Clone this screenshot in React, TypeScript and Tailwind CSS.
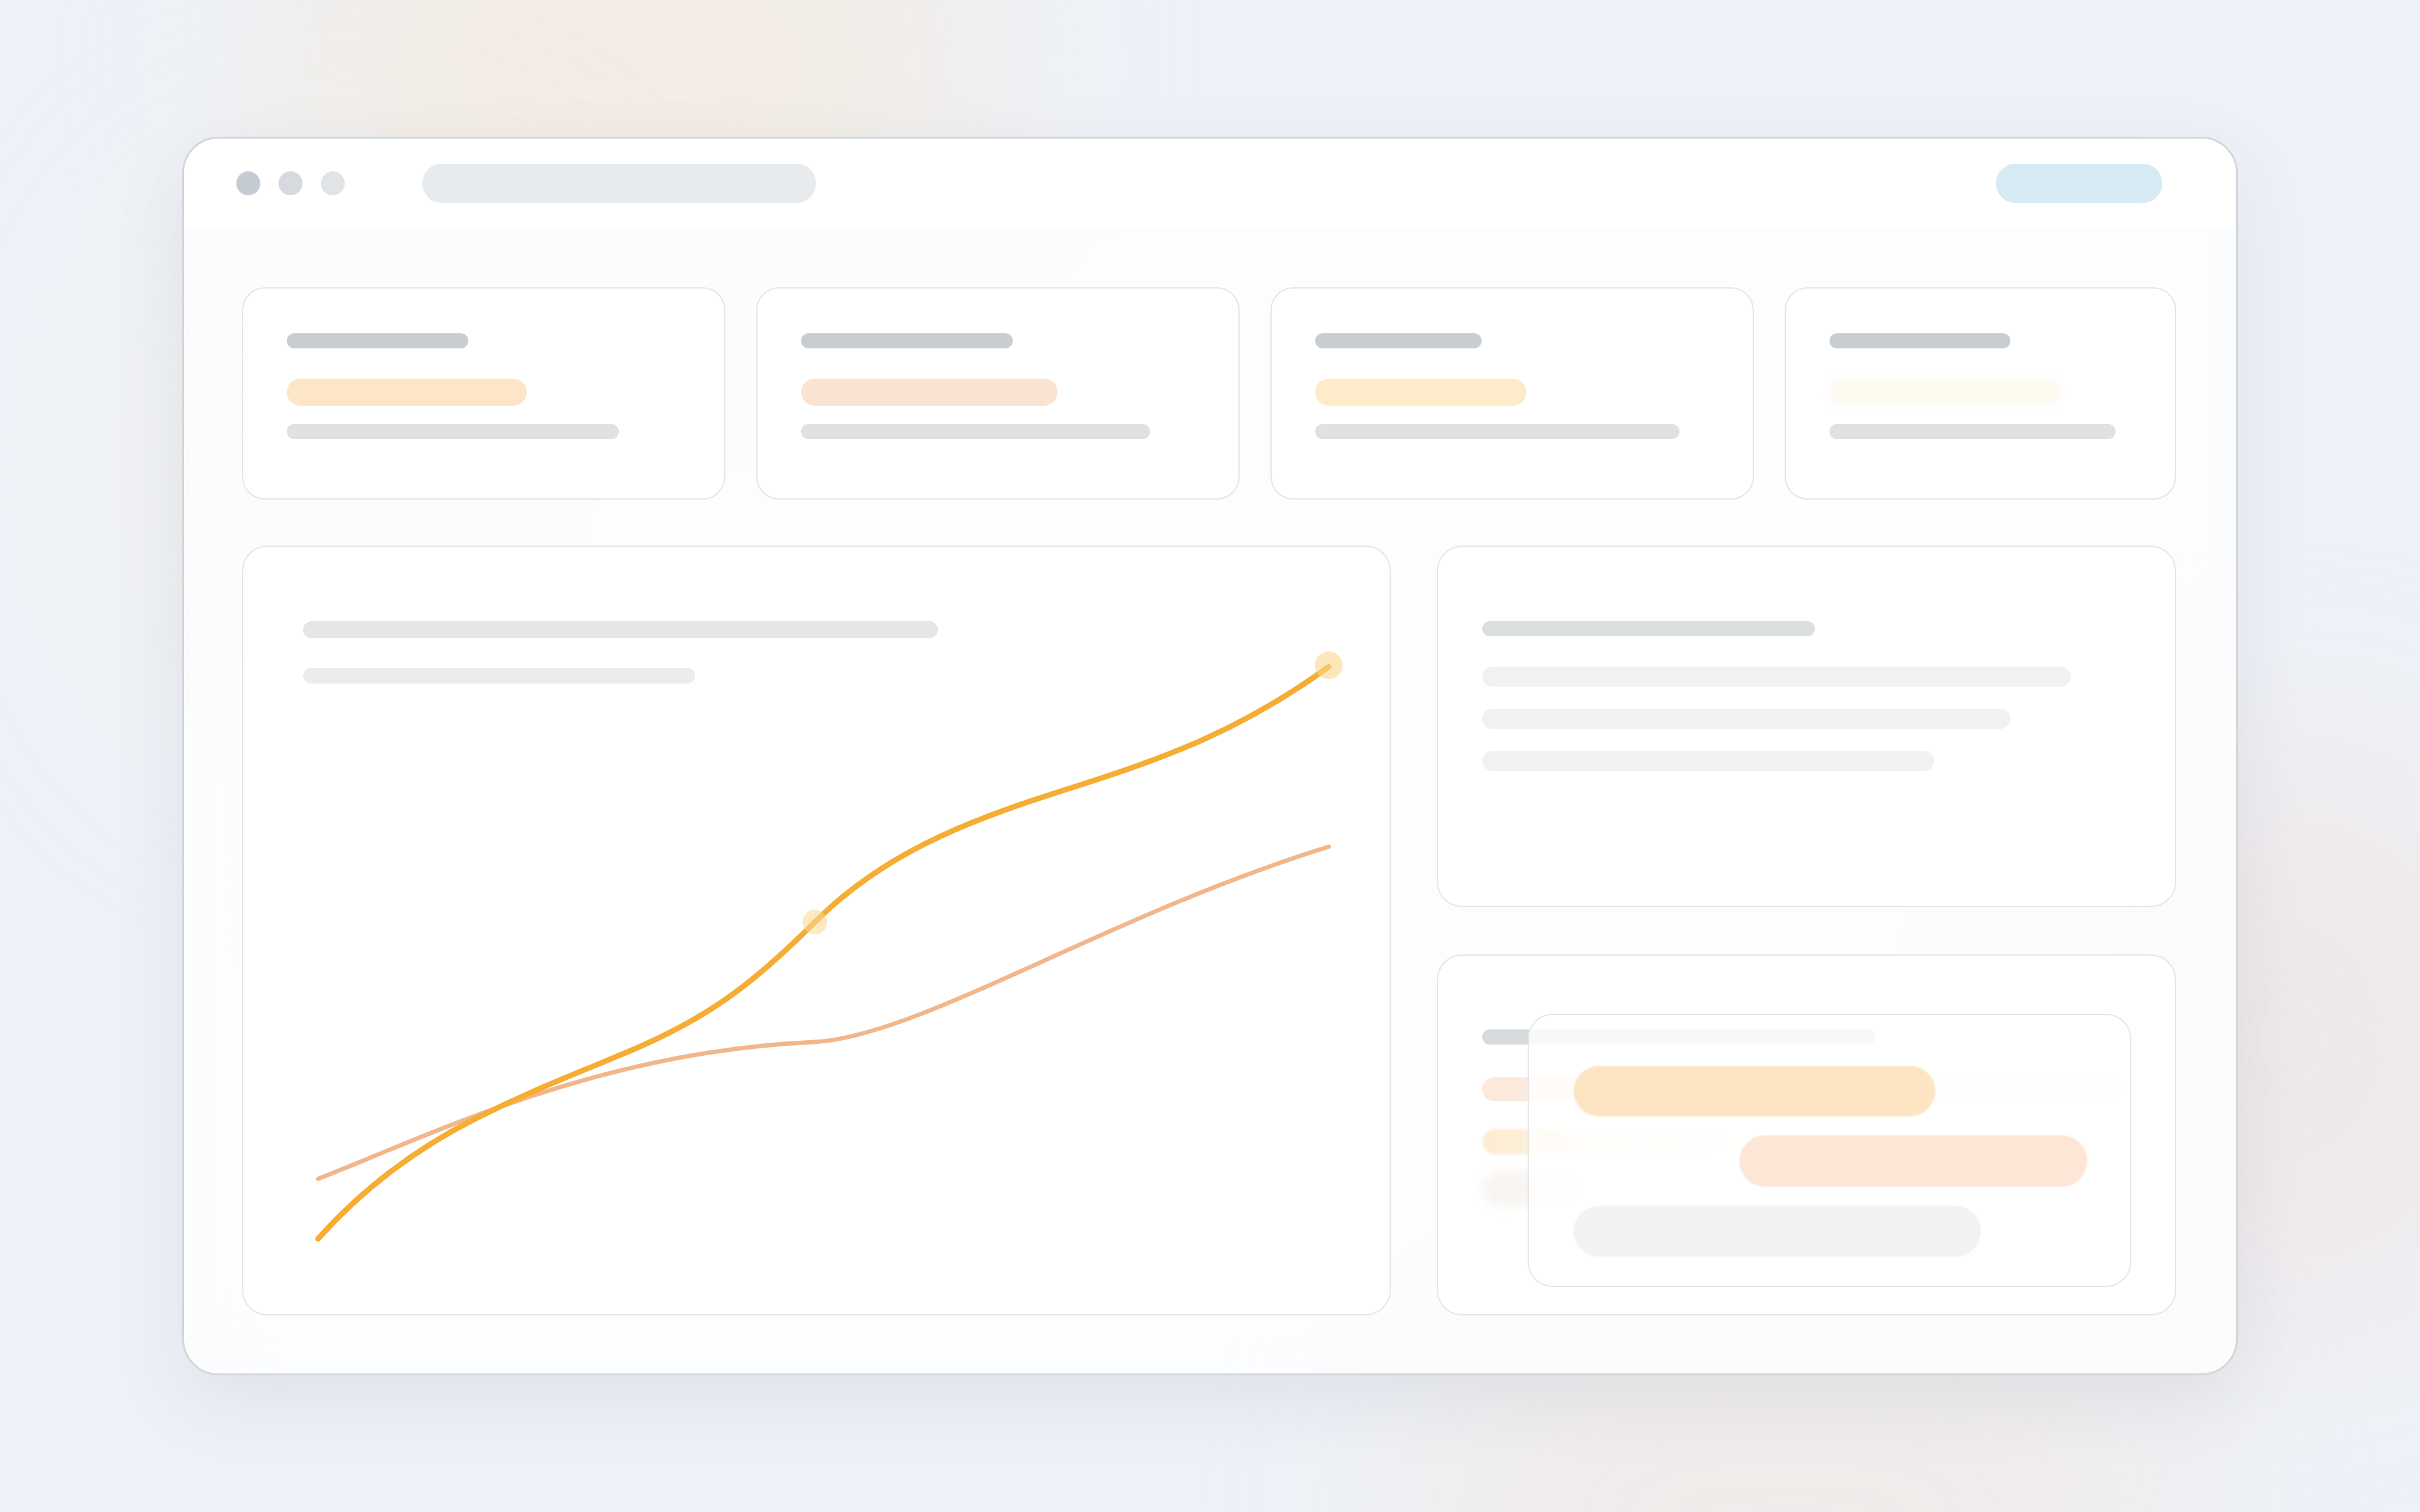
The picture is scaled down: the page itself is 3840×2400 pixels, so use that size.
import React from "react";

type StatCard = {
  title: string;
  accent: string;
  meta: string;
};

const statCards: StatCard[] = [
  { title: "w-[288px]", accent: "w-[381px] bg-[#fde6c8]", meta: "w-[527px]" },
  { title: "w-[336px]", accent: "w-[407px] bg-[#fbe3d1]", meta: "w-[554px]" },
  { title: "w-[264px]", accent: "w-[335px] bg-[#fdebc9]", meta: "w-[578px]" },
  { title: "w-[287px]", accent: "w-[365px] bg-[#fdf9ef] blur-[6px]", meta: "w-[454px]" },
];

function WindowDots() {
  return (
    <div className="flex items-center gap-[29px]">
      <div className="w-[38px] h-[38px] rounded-full bg-[#c4cbd3]" />
      <div className="w-[38px] h-[38px] rounded-full bg-[#d6dade]" />
      <div className="w-[38px] h-[38px] rounded-full bg-[#e1e4e7]" />
    </div>
  );
}

function StatTile({ card }: { card: StatCard }) {
  return (
    <div className="h-[337px] rounded-[36px] border-2 border-[#e3e6e8] bg-white/90 pl-[69px] pt-[71px] flex flex-col">
      <div className={`h-[24px] rounded-full bg-[#c8cdd2] ${card.title}`} />
      <div className={`mt-[48px] h-[43px] rounded-full ${card.accent}`} />
      <div className={`mt-[29px] h-[24px] rounded-full bg-[#dfe2e4] ${card.meta}`} />
    </div>
  );
}

function ChartCard() {
  return (
    <div className="relative rounded-[40px] border-2 border-[#e3e6e8] bg-white pl-[95px] pt-[118px] flex flex-col">
      <div className="w-[1007px] h-[27px] rounded-full bg-[#e3e5e6]" />
      <div className="mt-[47px] w-[622px] h-[25px] rounded-full bg-[#ebecec]" />

      {/* trend lines */}
      <svg
        className="absolute inset-0 w-full h-full"
        viewBox="0 0 744 499"
        fill="none"
      >
        <path
          d="M48 411 C120 383 230 328 371 322 C440 318 560 240 705 195"
          stroke="#f1b78b"
          strokeWidth="2.8"
          strokeLinecap="round"
        />
        <path
          d="M48 450 C72 423 105 395 150 372 C190 352 215 343 243 331 C300 308 330 285 371 244 C420 195 480 175 543 155 C600 137 650 118 705 78"
          stroke="#f6ad33"
          strokeWidth="3.6"
          strokeLinecap="round"
        />
        <circle cx="371" cy="244" r="8" fill="#fcd98f" opacity="0.55" />
        <circle cx="705" cy="77" r="9" fill="#fbd68c" opacity="0.6" />
      </svg>
    </div>
  );
}

function NotesCard() {
  return (
    <div className="flex-1 rounded-[40px] border-2 border-[#e3e6e8] bg-white pl-[70px] pt-[118px] flex flex-col">
      <div className="w-[528px] h-[24px] rounded-full bg-[#dadfdf]" />
      <div className="mt-[48px] w-[934px] h-[32px] rounded-full bg-[#f1f1f1]" />
      <div className="mt-[35px] w-[838px] h-[32px] rounded-full bg-[#f1f1f1]" />
      <div className="mt-[35px] w-[717px] h-[32px] rounded-full bg-[#f2f2f2]" />
    </div>
  );
}

function StackedCard() {
  return (
    <div className="relative flex-1 rounded-[40px] border-2 border-[#e3e6e8] bg-white pl-[70px] pt-[117px] flex flex-col">
      <div className="w-[624px] h-[24px] rounded-full bg-[#d6dadd]" />
      <div className="mt-[52px] w-[1014px] h-[38px] rounded-full bg-gradient-to-r from-[#fbe9dc] via-[#fdf3ea] to-[#fefaf6]" />
      <div className="mt-[44px] w-[420px] h-[40px] rounded-full bg-gradient-to-r from-[#fdecd2] to-[#fffdf8] blur-[2px]" />
      <div className="mt-[27px] w-[150px] h-[55px] rounded-full bg-[#f8f5f1] blur-[8px]" />

      {/* floating panel */}
      <div className="absolute left-[142px] top-[92px] w-[958px] h-[434px] rounded-[40px] border-2 border-[#e4e7ea] bg-white/80 backdrop-blur-[2px] pl-[71px] pt-[81px] flex flex-col gap-[30px]">
        <div className="w-[574px] h-[80px] rounded-full bg-[#fde5c3] blur-[1px]" />
        <div className="ml-[263px] w-[552px] h-[82px] rounded-full bg-[#fde6d6] blur-[1px]" />
        <div className="w-[646px] h-[81px] rounded-full bg-[#f2f2f2] blur-[1px]" />
      </div>
    </div>
  );
}

export default function App() {
  return (
    <div className="relative w-full h-[2400px] overflow-hidden bg-[#eef2f8] flex items-center justify-center">
      {/* ambient glow */}
      <div className="absolute left-[450px] top-[-250px] w-[1100px] h-[700px] rounded-full bg-[#f7e6d0] opacity-50 blur-[170px]" />
      <div className="absolute left-[200px] top-[300px] w-[700px] h-[900px] rounded-full bg-[#f7efe4] opacity-40 blur-[170px]" />
      <div className="absolute right-[-150px] bottom-[300px] w-[700px] h-[900px] rounded-full bg-[#f1dcd8] opacity-45 blur-[170px]" />
      <div className="absolute right-[400px] bottom-[-300px] w-[1200px] h-[600px] rounded-full bg-[#f4e3d8] opacity-45 blur-[170px]" />

      <div className="relative w-[3262px] h-[1966px] rounded-[58px] border-[3px] border-[#d2d6db] bg-white/80 backdrop-blur-3xl shadow-[0_40px_120px_rgba(40,50,80,0.08)] flex flex-col overflow-hidden">
        {/* top bar */}
        <div className="h-[142px] shrink-0 bg-white/90 flex items-center pl-[83px] pr-[117px]">
          <WindowDots />
          <div className="ml-[123px] w-[625px] h-[62px] rounded-full bg-[#e8ebed]" />
          <div className="ml-auto w-[264px] h-[62px] rounded-full bg-[#d7e9f2]" />
        </div>

        {/* body */}
        <div className="flex-1 flex flex-col gap-[73px] pl-[92px] pr-[95px] pt-[94px] pb-[92px]">
          <div className="grid grid-cols-[767px_767px_767px_1fr] gap-[49px]">
            {statCards.map((c, i) => (
              <StatTile key={i} card={c} />
            ))}
          </div>

          <div className="flex-1 grid grid-cols-[1823px_1fr] gap-[73px]">
            <ChartCard />
            <div className="flex flex-col gap-[75px]">
              <NotesCard />
              <StackedCard />
            </div>
          </div>
        </div>
      </div>
    </div>
  );
}
